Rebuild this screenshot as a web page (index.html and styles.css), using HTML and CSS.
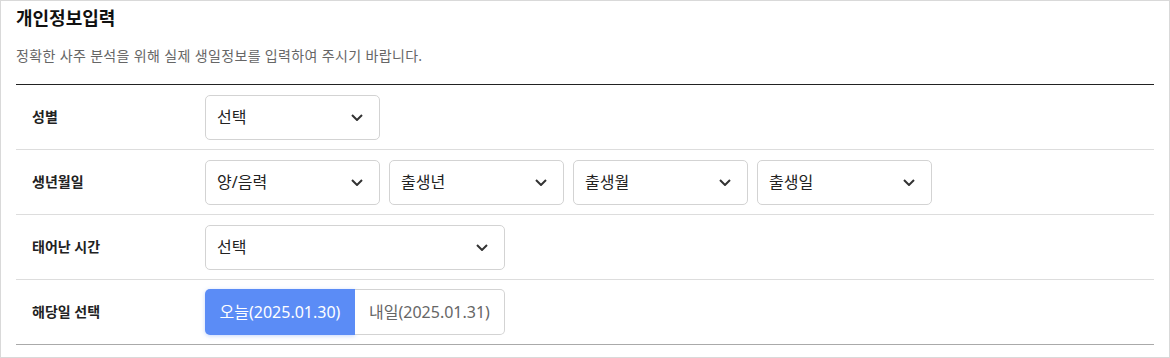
FILE: index.html
```html
<!DOCTYPE html>
<html lang="ko">
<head>
<meta charset="utf-8">
<title>개인정보입력</title>
<link rel="stylesheet" href="styles.css">
</head>
<body>
<div class="panel">
  <h2 class="title">개인정보입력</h2>
  <p class="desc">정확한 사주 분석을 위해 실제 생일정보를 입력하여 주시기 바랍니다.</p>
  <div class="table">
    <div class="row">
      <div class="label">성별</div>
      <div class="field">
        <div class="select w175"><span>선택</span><svg class="chev" viewBox="0 0 12 7"><path d="M1 1l5 5 5-5"/></svg></div>
      </div>
    </div>
    <div class="row">
      <div class="label">생년월일</div>
      <div class="field">
        <div class="select w175"><span>양/음력</span><svg class="chev" viewBox="0 0 12 7"><path d="M1 1l5 5 5-5"/></svg></div>
        <div class="select w175"><span>출생년</span><svg class="chev" viewBox="0 0 12 7"><path d="M1 1l5 5 5-5"/></svg></div>
        <div class="select w175"><span>출생월</span><svg class="chev" viewBox="0 0 12 7"><path d="M1 1l5 5 5-5"/></svg></div>
        <div class="select w175"><span>출생일</span><svg class="chev" viewBox="0 0 12 7"><path d="M1 1l5 5 5-5"/></svg></div>
      </div>
    </div>
    <div class="row">
      <div class="label">태어난 시간</div>
      <div class="field">
        <div class="select w300"><span>선택</span><svg class="chev" viewBox="0 0 12 7"><path d="M1 1l5 5 5-5"/></svg></div>
      </div>
    </div>
    <div class="row last">
      <div class="label">해당일 선택</div>
      <div class="field">
        <div class="toggle">
          <button class="opt active">오늘(2025.01.30)</button>
          <button class="opt">내일(2025.01.31)</button>
        </div>
      </div>
    </div>
  </div>
</div>
</body>
</html>
```
FILE: styles.css
```css
* { box-sizing: border-box; }
html, body { margin: 0; padding: 0; background: #fff; }
body {
  font-family: "Noto Sans", "Noto Sans CJK KR", sans-serif;
  color: #222;
}
.panel {
  width: 1170px;
  height: 358px;
  border: 1px solid #d9d9d9;
  padding: 4px 15px 0 15px;
}
.title {
  margin: 0;
  font-size: 18px;
  font-weight: 700;
  line-height: 26px;
  color: #111;
}
.desc {
  margin: 15px 0 0 0;
  font-size: 14px;
  line-height: 20px;
  letter-spacing: 0.35px;
  color: #666;
}
.table {
  margin-top: 18px;
  border-top: 1px solid #222;
}
.row {
  display: flex;
  align-items: center;
  height: 65px;
  border-bottom: 1px solid #ddd;
}
.row.last { border-bottom-color: #aaa; }
.label {
  width: 189px;
  padding-left: 16px;
  font-size: 14px;
  font-weight: 700;
  line-height: 20px;
  color: #222;
}
.field {
  display: flex;
  gap: 9px;
}
.select {
  display: flex;
  align-items: center;
  justify-content: space-between;
  height: 45px;
  padding: 0 16px 0 11px;
  border: 1px solid #d3d3d3;
  border-radius: 5px;
  font-size: 16px;
  line-height: 22px;
  color: #222;
  background: #fff;
}
.w175 { width: 175px; }
.w300 { width: 300px; }
.chev {
  width: 12px;
  height: 7px;
  fill: none;
  stroke: #333;
  stroke-width: 2;
}
.toggle {
  display: flex;
  height: 46px;
  border-radius: 5px;
}
.opt {
  width: 150px;
  height: 46px;
  font-family: inherit;
  font-size: 16px;
  line-height: 22px;
  color: #666;
  background: #fff;
  border: 1px solid #d3d3d3;
  border-left: 0;
  border-radius: 0 5px 5px 0;
  padding: 0;
}
.opt.active {
  color: #fff;
  background: #5b8cf6;
  border: 0;
  border-radius: 5px 0 0 5px;
  box-shadow: 0 1px 4px rgba(91, 140, 246, 0.35);
}
```
